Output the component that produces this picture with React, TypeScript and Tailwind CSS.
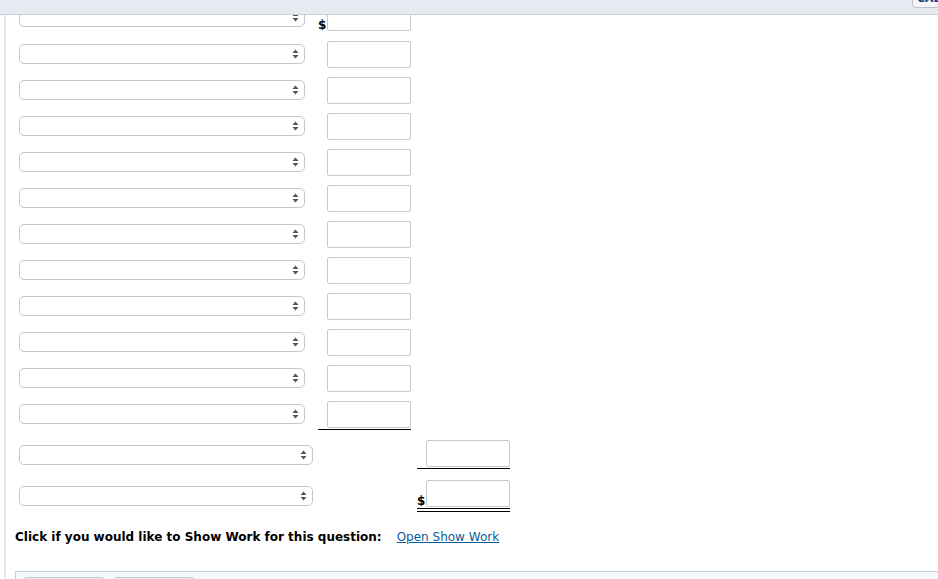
import React from 'react';

// little up/down arrows painted inside each dropdown
function Arrows() {
  return (
    <svg width="7" height="10" viewBox="0 0 7 10" className="shrink-0">
      <path d="M3.5 0.5 L6.5 4 L0.5 4 Z" fill="#555" />
      <path d="M0.5 6 L6.5 6 L3.5 9.5 Z" fill="#555" />
    </svg>
  );
}

function Dropdown({ wide = false }: { wide?: boolean }) {
  return (
    <div
      className={`flex h-[20px] items-center justify-end rounded-[5px] border border-[#c6c6c6] bg-white pr-[5px] ${
        wide ? 'w-[294px]' : 'w-[286px]'
      }`}
    >
      <Arrows />
    </div>
  );
}

function Box() {
  return <div className="h-[27px] w-[84px] rounded-[2px] border border-[#c9c9c9] bg-white" />;
}

function Amount({ dollar = false }: { dollar?: boolean }) {
  return (
    <div className="flex w-[93px] items-end">
      <span className="w-[9px] text-[12px] font-bold leading-[12px] text-black">{dollar ? '$' : ''}</span>
      <Box />
    </div>
  );
}

export default function App() {
  const rows = Array.from({ length: 10 }, (_, i) => i);

  return (
    <div className="relative h-[579px] w-[938px] overflow-hidden bg-white font-['DejaVu_Sans',Verdana,sans-serif]">
      {/* Sticky header strip */}
      <div className="absolute inset-x-0 top-0 z-10 h-[15px] border-b border-[#c9d1dc] bg-[#e6eaf1]">
        <div className="absolute left-[912px] top-[-12px] rounded-[4px] border border-[#bcc3cc] bg-[#f4f6f9] px-[4px] pt-[4px] pb-[2px] text-[11px] font-bold leading-[12px] text-[#1e3a78]">
          CALCULATOR
        </div>
      </div>

      <div className="ml-[4px] h-full border-l-2 border-[#e0e7f0] pl-[9px]">
        <div className="pl-[4px]">
          {/* Row 1, partly under the header */}
          <div className="-mt-[1px] flex h-[36px] items-center gap-[13px]">
            <Dropdown />
            <Amount dollar />
          </div>

          {rows.map((i) => (
            <div key={i} className={`flex h-[36px] items-center gap-[13px] ${i === 0 ? 'mt-[1px]' : ''}`}>
              <Dropdown />
              <Amount />
            </div>
          ))}

          {/* Row 12, subtotal line */}
          <div className="flex h-[36px] items-center gap-[13px]">
            <Dropdown />
            <div className="mt-[2px] border-b border-black pb-[1px]">
              <Amount />
            </div>
          </div>

          {/* Row 13 */}
          <div className="flex h-[40px] items-start gap-[6px]">
            <div className="mt-[13px]">
              <Dropdown wide />
            </div>
            <div className="w-[92px]" />
            <div className="mt-[8px] border-b border-black pb-[1px]">
              <Amount />
            </div>
          </div>

          {/* Row 14, total with double rule */}
          <div className="flex h-[40px] items-start gap-[6px]">
            <div className="mt-[14px]">
              <Dropdown wide />
            </div>
            <div className="w-[92px]" />
            <div className="mt-[8px] border-b-4 border-double border-black pb-[1px]">
              <Amount dollar />
            </div>
          </div>
        </div>

        <div className="mt-[18px] flex items-center text-[12px] leading-[15px]">
          <span className="font-bold text-black">Click if you would like to Show Work for this question:</span>
          <a href="#" className="ml-[15px] text-[#0b5c9e] underline">
            Open Show Work
          </a>
        </div>

        {/* Bottom toolbar, cut off by the window */}
        <div className="mt-[26px] h-[40px] border-l border-t border-[#c8d2de] bg-[#f3f6fa] pl-[8px] pt-[5px]">
          <div className="flex gap-[10px]">
            <div className="h-[20px] w-[80px] rounded-[3px] border border-[#c4ccd6] bg-[#e9edf2]" />
            <div className="h-[20px] w-[80px] rounded-[3px] border border-[#c4ccd6] bg-[#e9edf2]" />
          </div>
        </div>
      </div>
    </div>
  );
}
